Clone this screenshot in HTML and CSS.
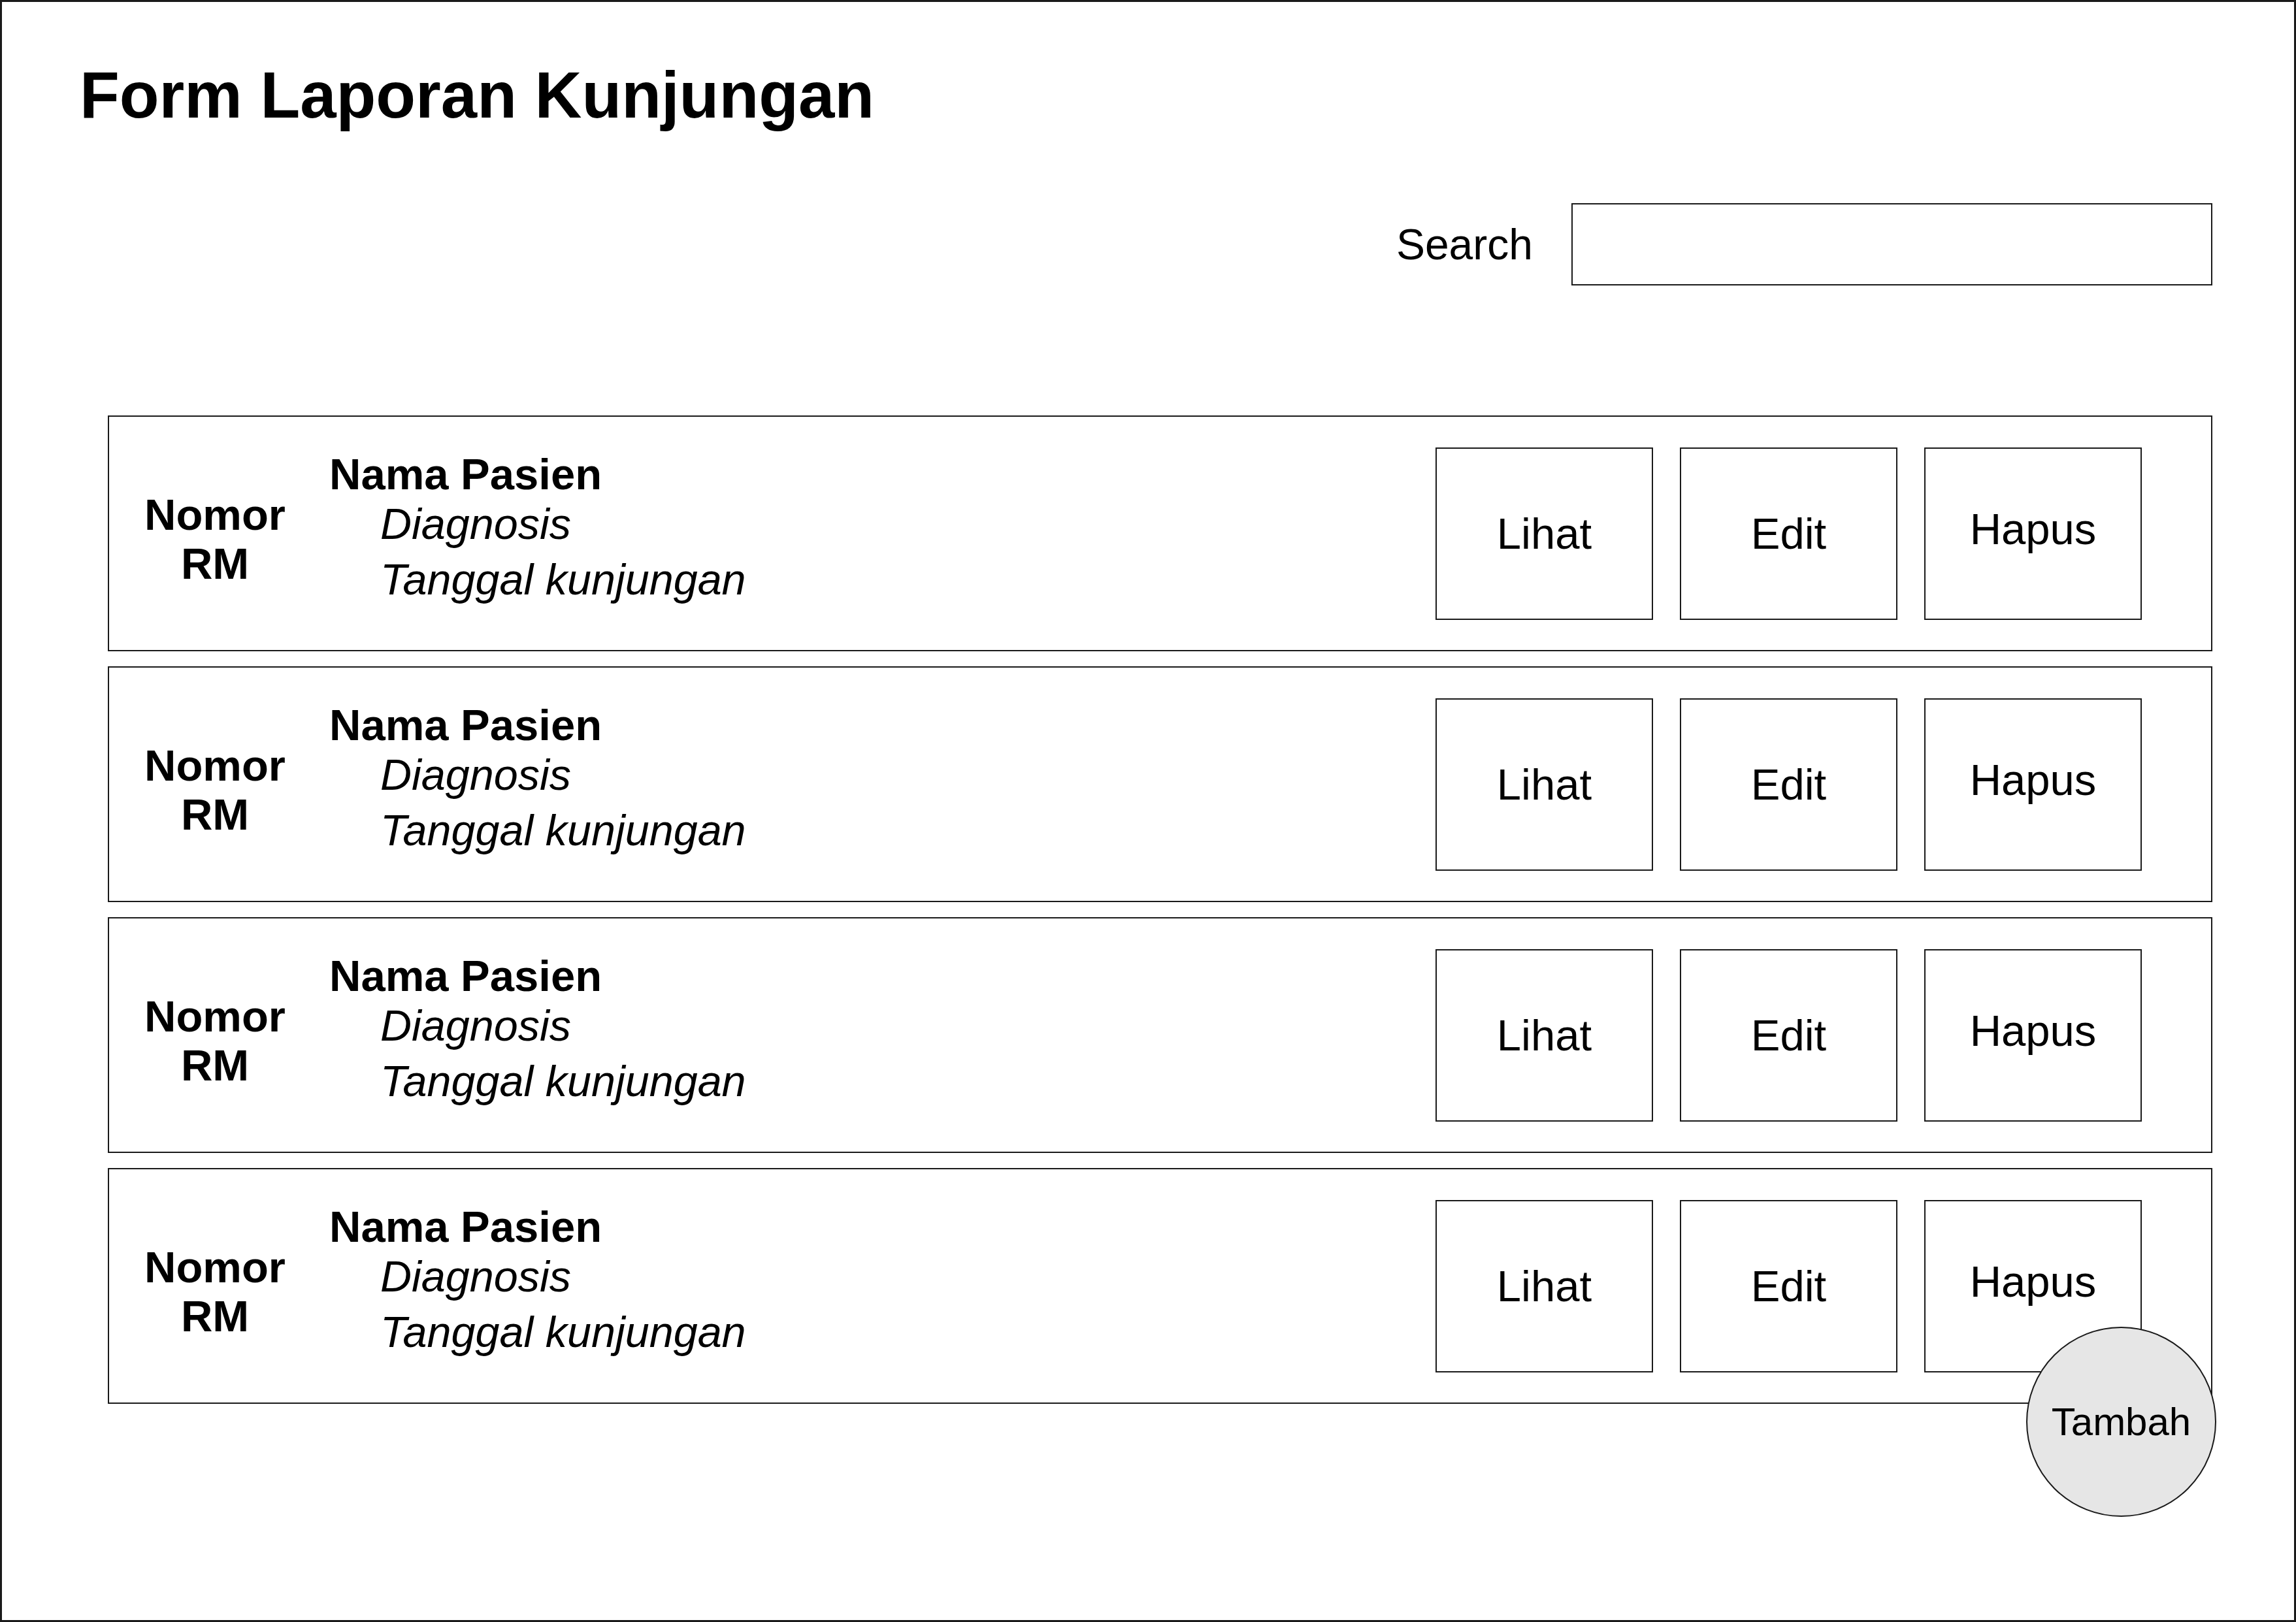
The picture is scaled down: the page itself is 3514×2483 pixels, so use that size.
FILE: index.html
```html
<!DOCTYPE html>
<html lang="id">
<head>
<meta charset="utf-8">
<title>Form Laporan Kunjungan</title>
<link rel="stylesheet" href="styles.css">
</head>
<body>
<div class="frame">
  <h1 class="title">Form Laporan Kunjungan</h1>
  <div class="search-bar">
    <label class="search-label" for="q">Search</label>
    <div class="search-input" id="q"></div>
  </div>
  <div class="list">
    <div class="row">
      <div class="rm">Nomor<br>RM</div>
      <div class="info">
        <div class="name">Nama Pasien</div>
        <div class="diag">Diagnosis</div>
        <div class="date">Tanggal kunjungan</div>
      </div>
      <div class="actions">
        <div class="btn">Lihat</div>
        <div class="btn">Edit</div>
        <div class="btn btn-up">Hapus</div>
      </div>
    </div>
    <div class="row">
      <div class="rm">Nomor<br>RM</div>
      <div class="info">
        <div class="name">Nama Pasien</div>
        <div class="diag">Diagnosis</div>
        <div class="date">Tanggal kunjungan</div>
      </div>
      <div class="actions">
        <div class="btn">Lihat</div>
        <div class="btn">Edit</div>
        <div class="btn btn-up">Hapus</div>
      </div>
    </div>
    <div class="row">
      <div class="rm">Nomor<br>RM</div>
      <div class="info">
        <div class="name">Nama Pasien</div>
        <div class="diag">Diagnosis</div>
        <div class="date">Tanggal kunjungan</div>
      </div>
      <div class="actions">
        <div class="btn">Lihat</div>
        <div class="btn">Edit</div>
        <div class="btn btn-up">Hapus</div>
      </div>
    </div>
    <div class="row">
      <div class="rm">Nomor<br>RM</div>
      <div class="info">
        <div class="name">Nama Pasien</div>
        <div class="diag">Diagnosis</div>
        <div class="date">Tanggal kunjungan</div>
      </div>
      <div class="actions">
        <div class="btn">Lihat</div>
        <div class="btn">Edit</div>
        <div class="btn btn-up">Hapus</div>
      </div>
    </div>
  </div>
  <div class="fab">Tambah</div>
</div>
</body>
</html>
```

FILE: styles.css
```css
html, body {
  margin: 0;
  padding: 0;
  background: #ffffff;
}

body {
  font-family: "Liberation Sans", Arial, Helvetica, sans-serif;
  color: #000000;
}

.frame {
  position: relative;
  width: 3514px;
  height: 2483px;
  box-sizing: border-box;
  border: 3px solid #1a1a1a;
  background: #ffffff;
}

.title {
  margin: 0;
  padding: 93px 0 0 119px;
  font-size: 99.5px;
  line-height: 100px;
  font-weight: bold;
}

.search-bar {
  display: flex;
  justify-content: flex-end;
  align-items: center;
  margin-top: 115px;
  padding-right: 125px;
}

.search-label {
  font-size: 66px;
  line-height: 66px;
  margin-right: 59px;
}

.search-input {
  width: 981px;
  height: 126px;
  box-sizing: border-box;
  border: 2px solid #1a1a1a;
  background: #ffffff;
}

.list {
  display: flex;
  flex-direction: column;
  gap: 23px;
  margin: 199px 125px 0 162px;
}

.row {
  display: flex;
  align-items: center;
  height: 361px;
  box-sizing: border-box;
  border: 2px solid #1a1a1a;
}

.rm {
  width: 216px;
  margin-left: 54px;
  margin-top: 16px;
  text-align: center;
  font-size: 67px;
  line-height: 75px;
  font-weight: bold;
}

.info {
  align-self: flex-start;
  margin-left: 67px;
  padding-top: 55px;
  font-size: 66.5px;
  line-height: 65px;
}

.name {
  font-weight: bold;
  font-size: 67px;
}

.diag,
.date {
  font-style: italic;
  padding-left: 78px;
}

.diag {
  margin-top: 12px;
}

.date {
  margin-top: 20px;
}

.actions {
  display: flex;
  gap: 41px;
  margin-left: auto;
  margin-right: 106px;
}

.btn {
  width: 333px;
  height: 264px;
  box-sizing: border-box;
  border: 2px solid #1a1a1a;
  display: flex;
  align-items: center;
  justify-content: center;
  font-size: 67px;
  line-height: 67px;
}

.btn-up {
  padding-bottom: 14px;
}

.fab {
  position: absolute;
  left: 3098px;
  top: 2028px;
  width: 291px;
  height: 291px;
  box-sizing: border-box;
  border-radius: 50%;
  border: 2px solid #1a1a1a;
  background: #e6e6e6;
  display: flex;
  align-items: center;
  justify-content: center;
  font-size: 60px;
  line-height: 60px;
}
```
